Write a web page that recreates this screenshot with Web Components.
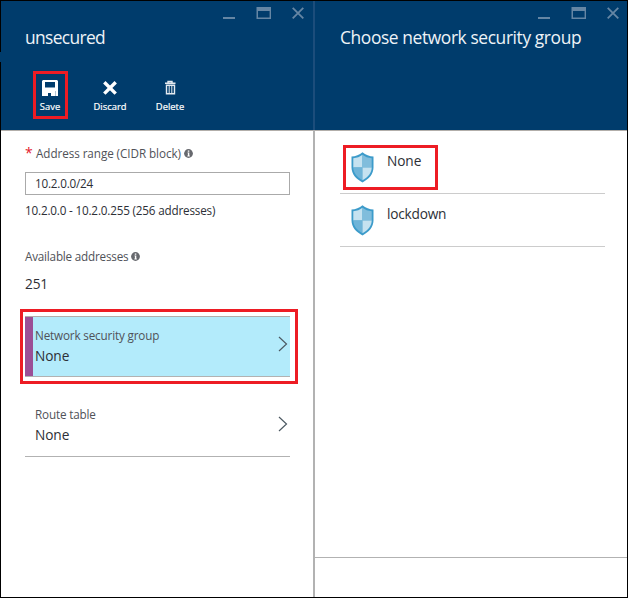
<!DOCTYPE html>
<html lang="en">
<head>
<meta charset="utf-8">
<title>Choose network security group</title>
<style>
html,body{margin:0;height:100%;overflow:hidden}
body{font-family:"Open Sans","Noto Sans",sans-serif;background:#fff}
</style>
</head>
<body>
<portal-frame>
  <portal-blade heading="unsecured" class="edit">
    <command-button slot="commands" label="Save" icon="save" marked></command-button>
    <command-button slot="commands" label="Discard" icon="discard"></command-button>
    <command-button slot="commands" label="Delete" icon="delete"></command-button>
    <address-form></address-form>
    <setting-link label="Network security group" value="None" selected></setting-link>
    <setting-link label="Route table" value="None"></setting-link>
  </portal-blade>
  <portal-blade heading="Choose network security group" footer>
    <group-option marked>None</group-option>
    <group-option>lockdown</group-option>
  </portal-blade>
</portal-frame>
<script>
class Base extends HTMLElement {
  connectedCallback() {
    if (this.shadowRoot) return;
    this.attachShadow({mode: 'open'}).innerHTML =
      '<style>*{box-sizing:border-box}svg{display:block;flex:none}</style>' + this.view();
  }
}
const ICONS = {
  save: '<svg width="18" height="18" viewBox="0 0 18 18"><path fill="#fff" fill-rule="evenodd" d="M2 1H16L17 2V17H14.300V12H4.200V17H1V2zM4 3V8.500H14V3zM5 12H14V17H10V14H7V17H5z"/><path fill="#fff" d="M4 11.500H7V17H4z"/></svg>',
  discard: '<svg width="18" height="18" viewBox="0 0 18 18"><path d="M3.300 3.200l11.400 11.400M14.700 3.200L3.300 14.600" stroke="#fff" stroke-width="3.400"/></svg>',
  delete: '<svg width="18" height="18" viewBox="0 0 18 18"><path fill="none" stroke="#e4eaf0" d="M4 4.200h10.500M7 3.800V2.500h4v1.300M5.500 6.200h8v8.500h-8z" stroke-width="1.400"/><path stroke="#e4eaf0" d="M8.200 7v7M10.800 7v7"/></svg>'
};
const INFO = '<svg width="9" height="9" viewBox="0 0 9 9"><circle cx="4.500" cy="4.500" r="4.400" fill="#67696e"/><path fill="#fff" d="M3.800 1.400h1.500v1.300H3.800zM3.500 3.500h1.800v3.100h.5v.8H3.400v-.8h.5V4.300h-.4z"/></svg>';

customElements.define('portal-frame', class extends Base {
  view() { return `<style>
    :host{display:grid;grid-template-columns:312px 2px 312px;width:628px;height:598px;box-sizing:border-box;border:1px solid #000;position:relative}
    .rule{grid-column:2;grid-row:1;background:linear-gradient(#1c4d7b 129px,#b2b2b2 129px)}
    ::slotted(.edit){grid-column:1;grid-row:1}
    ::slotted(:not(.edit)){grid-column:3;grid-row:1}
    .notch{position:absolute;left:-1px;top:51px;width:1px;height:10px;background:#003c6c}
  </style><slot></slot><div class="rule"></div><div class="notch"></div>`; }
});

customElements.define('window-controls', class extends Base {
  view() { return `<style>:host{display:flex;justify-content:flex-end;height:20px;padding:6px 7px 0 0;box-sizing:border-box}</style>
  <svg width="84" height="14" viewBox="0 0 84 14" fill="#6586a4"><path d="M1 10h12v2H1z"/><path fill-rule="evenodd" d="M34.500 0H49v12H34.500zM36 4v6.600h11.600V4z"/><path d="M70.700.8l10.600 10.600M81.300.8L70.700 11.400" fill="none" stroke="#6586a4" stroke-width="1.800"/></svg>`; }
});

customElements.define('portal-blade', class extends Base {
  view() { return `<style>
    :host{display:flex;flex-direction:column;min-width:0;height:596px}
    :host([footer]) window-controls{padding-right:6px}
    :host([footer]) h1{margin-left:25px}
    header{height:130px;flex:none;background:#003c6c;border-bottom:1px solid #b2aeaa;color:#fff}
    h1{margin:2px 0 0 24px;font-size:17.400px;letter-spacing:-.4px;line-height:28px;font-weight:400;color:#eef3f7;white-space:nowrap}
    :host(.edit) h1{letter-spacing:-.65px}
    nav{display:flex;margin:20px 0 0 19px}
    main{flex:1;padding:0 24px}
    footer{height:40px;border-top:1px solid #b2b2b2}
  </style><header><window-controls></window-controls><h1>${this.getAttribute('heading')}</h1><nav><slot name="commands"></slot></nav></header>
  <main><slot></slot></main>${this.hasAttribute('footer') ? '<footer></footer>' : ''}`; }
});

customElements.define('command-button', class extends Base {
  view() { return `<style>
    :host{display:flex;flex-direction:column;align-items:center;width:60px;height:48px;padding-top:8px;box-sizing:border-box;position:relative;color:#fff;font-size:9.400px;line-height:14px;-webkit-text-stroke:.2px #fff}
    span{margin-top:3px}
    :host([marked])::after{content:"";position:absolute;left:13px;top:0;width:35px;height:48px;border:3px solid #ed1c24;box-sizing:border-box}
  </style>${ICONS[this.getAttribute('icon')]}<span>${this.getAttribute('label')}</span>`; }
});

customElements.define('address-form', class extends Base {
  view() { return `<style>
    :host{display:block;height:185px;padding-top:13px;box-sizing:border-box;color:#2d2f36;font-size:11.700px;letter-spacing:-.2px;line-height:18px}
    .label{display:flex;align-items:center;color:#505258;white-space:nowrap}
    .label svg{margin-left:3px}
    b{width:11px;color:#e3202c;font-size:14px;font-weight:400;line-height:18px}
    .first{letter-spacing:-.07px}
    .box{height:23px;width:265px;border:1px solid #aaa;padding-left:9px;line-height:21px;margin:10px 0 6px}
    .range{letter-spacing:-.18px}
    .next{margin-top:28px;letter-spacing:-.2px}
    .value{font-size:13.700px;line-height:20px;margin-top:9px}
  </style><div class="label first"><b>*</b>Address range (CIDR block)${INFO}</div>
  <div class="box">10.2.0.0/24</div><div class="range">10.2.0.0 - 10.2.0.255 (256 addresses)</div>
  <div class="label next">Available addresses${INFO}</div><div class="value">251</div>`; }
});

customElements.define('setting-link', class extends Base {
  view() { return `<style>
    :host{display:flex;align-items:center;justify-content:space-between;position:relative;box-sizing:border-box;width:265px;height:80px;border-bottom:1px solid #b2b2b2;padding:17px 2px 0 10px;color:#2d2f36}
    :host([selected]){height:61px;padding:0 2px 2px 10px;border-top:1px solid #b2aeaa;background:#b3ebfb;box-shadow:inset 8px 0 #9b4f96}
    :host([selected])::after{content:"";position:absolute;left:-5px;top:-8px;width:278px;height:75px;border:3px solid #ed1c24;box-sizing:border-box}
    small{display:block;font-size:11.700px;letter-spacing:-.16px;line-height:20px;color:#505258}
    span{display:block;font-size:13.700px;letter-spacing:-.1px;line-height:22px}
    svg{position:relative;top:-1px}
    :host([selected]) svg{top:-1.500px}
  </style><div><small>${this.getAttribute('label')}</small><span>${this.getAttribute('value')}</span></div>
  <svg width="10" height="16" viewBox="0 0 10 16"><path d="M1 1l7.500 7L1 15" fill="none" stroke="#4c5962" stroke-width="1.200"/></svg>`; }
});

customElements.define('group-option', class extends Base {
  view() { return `<style>
    :host{display:flex;position:relative;box-sizing:border-box;width:265px;height:53px;margin-left:1px;border-bottom:1px solid #ccc;padding:11px 0 0 11px;color:#2d2f36;font-size:13.700px;letter-spacing:-.22px;line-height:20px}
    :host([marked]){height:63px;padding-top:21px;letter-spacing:-.1px}
    :host([marked])::after{content:"";position:absolute;left:3px;top:14px;width:95px;height:45px;border:3px solid #ed1c24;box-sizing:border-box}
    span{margin:-1px 0 0 13px}
  </style><svg width="23" height="31" viewBox="0 0 23 31">
    <path fill="#3c9bca" d="M11.500.3C14.500 3 18.500 4.500 22.500 4.500V15.500C22.500 22 18 27 11.500 30.500C5 27 .5 22 .5 15.500V4.500C4.500 4.500 8.500 3 11.500.3z"/>
    <path fill="#c5e2f0" d="M11.500 2.800V15.500H2.300V6.200C6 6 9 4.800 11.500 2.800z"/>
    <path fill="#80bddc" d="M11.500 2.800C14 4.800 17 6 20.700 6.200V15.500H11.500z"/>
    <path fill="#6eb4d8" d="M2.300 15.500H11.500V28.300C6 25 2.300 21 2.300 15.500z"/>
    <path fill="#c5e2f0" d="M11.500 15.500H20.700C20.700 21 17 25 11.500 28.300z"/>
  </svg><span><slot></slot></span>`; }
});
</script>
</body>
</html>
